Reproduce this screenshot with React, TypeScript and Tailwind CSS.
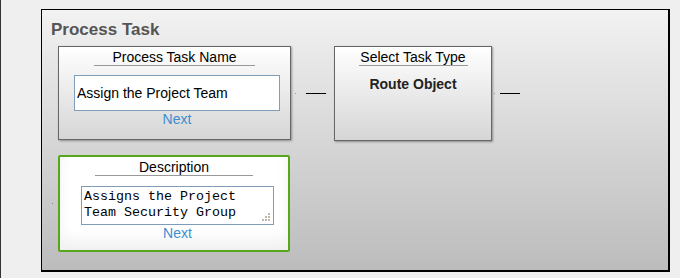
export default function App() {
  return (
    <div className="w-[680px] h-[278px] bg-[#efefef] border-l border-[#333] pt-[9px] pl-[40px] font-['Liberation_Sans',Arial,sans-serif]">
      <div className="w-[629px] h-[263px] border border-black border-r-2 border-b-2 bg-linear-to-b from-[#f2f2f2] to-[#bcbcbc] pl-[9px] pt-[10px]">
        <h1 className="text-[17px] leading-[20px] font-bold text-[#555]">Process Task</h1>

        {/* row 1 */}
        <div className="mt-[6px] ml-[7px] flex items-start">
          <div className="w-[233px] h-[94px] border border-[#666] bg-linear-to-b from-white to-[#d6d6d6] shadow-[1px_1px_2px_rgba(0,0,0,0.35)]">
            <div className="mx-auto w-[161px] pt-[2px] text-center text-[14px] leading-[16px] text-black border-b border-[#999]">
              Process Task Name
            </div>
            <div className="mt-[9px] ml-[15px] w-[206px] text-center">
              <input
                readOnly
                value="Assign the Project Team"
                className="block w-[206px] h-[36px] border border-[#7f9db9] bg-white pl-[2px] text-[14px] text-black outline-none font-['Liberation_Sans',Arial,sans-serif]"
              />
              <div className="text-[14px] leading-[16px] text-[#3b8ed0]">Next</div>
            </div>
          </div>

          <div className="w-[43px] h-[94px] flex items-center pl-[4px]">
            <div className="w-[1px] h-[1px] bg-[#999]" />
            <div className="ml-[10px] w-[20px] h-[1px] bg-black" />
          </div>

          <div className="w-[158px] h-[95px] border border-[#666] bg-linear-to-b from-white to-[#d6d6d6] shadow-[1px_1px_2px_rgba(0,0,0,0.35)]">
            <div className="mx-auto w-[109px] pt-[2px] text-center text-[14px] leading-[16px] text-black border-b border-[#999]">
              Select Task Type
            </div>
            <div className="mt-[10px] text-center text-[14px] leading-[16px] font-bold text-[#222]">
              Route Object
            </div>
          </div>

          <div className="h-[94px] flex items-center pl-[2px]">
            <div className="w-[1px] h-[1px] bg-[#999]" />
            <div className="ml-[5px] w-[20px] h-[1px] bg-black" />
          </div>
        </div>

        {/* row 2 */}
        <div className="mt-[14px] ml-[1px] flex items-center">
          <div className="w-[1px] h-[1px] bg-[#888]" />
          <div className="ml-[5px] w-[232px] h-[97px] border-2 border-[#58a61c] rounded-[2px] bg-white shadow-[inset_0_-10px_14px_rgba(0,0,0,0.06)]">
            <div className="mx-auto w-[158px] pt-[2px] text-center text-[14px] leading-[16px] text-black border-b border-[#999]">
              Description
            </div>
            <div className="mt-[10px] ml-[21px] w-[193px] text-center">
              <div className="relative">
                <textarea
                  readOnly
                  value={"Assigns the Project\nTeam Security Group"}
                  className="block w-[193px] h-[39px] border border-[#7f9db9] bg-white pl-[2px] pt-[2px] resize-none overflow-hidden text-left text-[13.33px] leading-[16px] text-black outline-none font-['Liberation_Mono','Courier_New',monospace]"
                />
                <svg className="absolute right-[3px] bottom-[3px]" width="10" height="10" viewBox="0 0 10 10">
                  <g fill="#c0b8a8">
                    <rect x="7" y="1" width="2" height="2" />
                    <rect x="4" y="4" width="2" height="2" />
                    <rect x="7" y="4" width="2" height="2" />
                    <rect x="1" y="7" width="2" height="2" />
                    <rect x="4" y="7" width="2" height="2" />
                    <rect x="7" y="7" width="2" height="2" />
                  </g>
                </svg>
              </div>
              <div className="text-[14px] leading-[16px] text-[#3b8ed0]">Next</div>
            </div>
          </div>
        </div>
      </div>
    </div>
  );
}
